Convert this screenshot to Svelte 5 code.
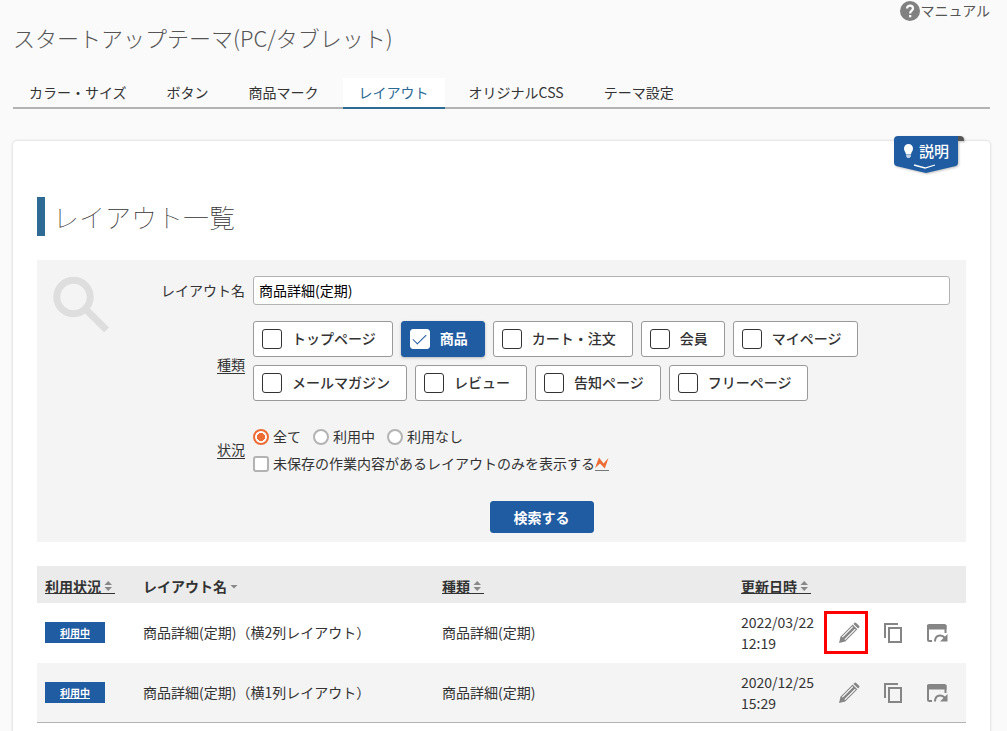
<script>
  const tabs = ['カラー・サイズ', 'ボタン', '商品マーク', 'レイアウト', 'オリジナルCSS', 'テーマ設定'];
  const kinds = ['トップページ', '商品', 'カート・注文', '会員', 'マイページ', 'メールマガジン', 'レビュー', '告知ページ', 'フリーページ'];
  const statuses = ['全て', '利用中', '利用なし'];
  const rows = [
    { name: '商品詳細(定期)（横2列レイアウト）', kind: '商品詳細(定期)', date: '2022/03/22', time: '12:19', marked: true },
    { name: '商品詳細(定期)（横1列レイアウト）', kind: '商品詳細(定期)', date: '2020/12/25', time: '15:29', marked: false }
  ];
  let name = $state('商品詳細(定期)');
  let selectedKinds = $state(['商品']);
  let status = $state('全て');
  let unsaved = $state(false);
</script>

{#snippet sorter(both)}
  <svg class="sort" width="14" height="14" viewBox="0 0 14 14" aria-hidden="true">
    {#if both}
      <path d="M3.500 6h7.500L7.200 2zM3.500 8h7.500L7.200 12z" />
    {:else}
      <path d="M3.500 6h7L7 9.500z" />
    {/if}
  </svg>
{/snippet}

<div class="page">
  <header>
    <a class="manual" href="#manual">
      <svg width="20" height="20" viewBox="0 0 20 20" aria-hidden="true">
        <circle cx="10" cy="10" r="10" fill="#808080" />
        <path d="M7 7.600C7 3.500 13 3.700 13 7.400C13 9.600 10.100 9.700 10.100 12.500" fill="none" stroke="#fafafa" stroke-width="2.200" />
        <rect x="9" y="14" width="2.300" height="2.300" fill="#fafafa" />
      </svg>マニュアル
    </a>
    <h1>スタートアップテーマ(PC/タブレット)</h1>
  </header>

  <nav>
    {#each tabs as tab}
      <a href="#tab" class:active={tab === 'レイアウト'}>{tab}</a>
    {/each}
  </nav>

  <main>
    <button class="help" type="button">
      <svg class="ribbon" width="72" height="40" viewBox="0 0 72 40" aria-hidden="true">
        <path d="M62 0h4a4 4 0 0 1 4 4v1h-8z" fill="#555" />
        <path d="M4 0h60v27q0 2-2 3l-30 7l-30-7q-2-1-2-3V4q0-4 4-4z" fill="#1f5ca2" />
        <path d="M20 29l11 3l10-3" fill="none" stroke="#fff" stroke-width="1.300" />
        <path d="M14.500 8a4.500 4.500 0 0 1 4.500 4.500c0 2.500-1.700 3.500-2 6h-5c-.3-2.500-2-3.500-2-6A4.500 4.500 0 0 1 14.500 8z" fill="#fff" />
        <path d="M12.200 19h4.600v1.500l-1.200 1.500h-2.200l-1.200-1.500z" fill="#c5d3e4" />
      </svg>
      <span>説明</span>
    </button>

    <h2>レイアウト一覧</h2>

    <form onsubmit={(e) => e.preventDefault()}>
      <svg class="magnifier" width="56" height="56" viewBox="0 0 56 56" aria-hidden="true">
        <circle cx="20.500" cy="21" r="16.700" fill="none" stroke="#dedede" stroke-width="7" />
        <path d="M32 32.500l21.500 21.500" stroke="#dedede" stroke-width="7" />
      </svg>
      <div class="fields">
        <label class="caption" for="layout-name">レイアウト名</label>
        <input id="layout-name" class="text" type="text" bind:value={name} />

        <span class="caption hint" id="kind-label">種類</span>
        <div class="kinds" role="group" aria-labelledby="kind-label">
          {#each kinds as kind}
            <label class="kind" class:on={selectedKinds.includes(kind)}>
              <input type="checkbox" value={kind} bind:group={selectedKinds} /><span>{kind}</span>
            </label>
          {/each}
        </div>

        <span class="caption hint" id="status-label">状況</span>
        <div class="status" role="group" aria-labelledby="status-label">
          <div class="radios">
            {#each statuses as s}
              <label><input type="radio" name="status" value={s} bind:group={status} />{s}</label>
            {/each}
          </div>
          <label class="unsaved">
            <input type="checkbox" bind:checked={unsaved} />未保存の作業内容があるレイアウトのみを表示する<svg class="flash" width="14" height="16" viewBox="0 0 14 16" aria-hidden="true">
              <path d="M0 12L4 1.500L8.500 7.500L13.500 2L9.800 12.500L5 7.500z" fill="#ed6c34" />
              <path d="M0 14.500h14" stroke="#777" />
            </svg>
          </label>
        </div>

        <button class="search" type="submit">検索する</button>
      </div>
    </form>

    <table>
      <colgroup><col class="c-use" /><col class="c-name" /><col class="c-kind" /><col class="c-date" /><col /></colgroup>
      <thead>
        <tr>
          <th><a class="under" href="#sort">利用状況{@render sorter(true)}</a></th>
          <th><a href="#sort">レイアウト名{@render sorter(false)}</a></th>
          <th><a class="under" href="#sort">種類{@render sorter(true)}</a></th>
          <th><a class="under" href="#sort">更新日時{@render sorter(true)}</a></th>
          <th></th>
        </tr>
      </thead>
      <tbody>
        {#each rows as row}
          <tr>
            <td><span class="using">利用中</span></td>
            <td>{row.name}</td>
            <td>{row.kind}</td>
            <td class="date">{row.date}<br />{row.time}</td>
            <td class="tools">
              <div class="actions">
                <button type="button" class:marked={row.marked} aria-label="編集">
                  <svg width="22" height="22" viewBox="0 0 22 22" aria-hidden="true">
                    <path d="M1 21l1.500-6.200L14.700 2.600l4.700 4.700L7.200 19.500z" fill="#858585" />
                    <path d="M15.400 1.900l1-1q.9-.8 1.800 0l2.900 2.900q.8.900 0 1.800l-1 1z" fill="#858585" />
                    <path d="M4.300 15.200L14.800 4.700M6.800 17.700L17.300 7.200" stroke="#fff" stroke-width="1.100" />
                    <path d="M14.600 1.900l5.500 5.500" stroke="#fff" stroke-width=".6" />
                  </svg>
                </button>
                <button type="button" aria-label="複製">
                  <svg width="22" height="22" viewBox="0 0 22 22" fill="none" stroke="#858585" stroke-width="2" aria-hidden="true">
                    <path d="M3 16V2h13" />
                    <rect x="7" y="6" width="12" height="14" />
                  </svg>
                </button>
                <button type="button" aria-label="プレビュー">
                  <svg width="22" height="22" viewBox="0 0 22 22" fill="none" stroke="#858585" aria-hidden="true">
                    <path d="M6 19H3.500q-1.500 0-1.500-1.500V4h17.500V11" stroke-width="2" />
                    <path d="M1 7.500V4q0-2 2-2h15.500q2 0 2 2v3.500z" fill="#858585" stroke="none" />
                    <path d="M9 19.500c0-6.500 6.500-7.500 10-3.500" stroke-width="2" />
                    <path d="M21.500 12v7.500h-7.500z" fill="#858585" stroke="none" />
                  </svg>
                </button>
              </div>
            </td>
          </tr>
        {/each}
      </tbody>
    </table>
  </main>
</div>

<style>
  :global(body) {
    background: #fafafa;
    overflow: hidden;
  }
  .page {
    padding: 0 17px 0 13px;
    font: 14px/21px "Noto Sans CJK JP", sans-serif;
    color: #333;
  }
  .page :is(input, button) {
    box-sizing: border-box;
    margin: 0;
    font: inherit;
    color: inherit;
  }
  a { color: inherit; text-decoration: none; }
  header { display: flex; flex-direction: column; }
  .manual { display: flex; align-self: flex-end; align-items: center; color: #555; height: 21px; }
  h1 { margin: 0 0 24px; font-size: 22px; line-height: 33px; font-weight: 300; color: #555; }
  nav { display: flex; gap: 8px; height: 31px; box-shadow: inset 0 -2px #b3b3b3; }
  nav a { padding: 4px 16px 6px; }
  nav .active { color: #2d6b94; background: #fff; box-shadow: inset 0 -2px #2d6b94; }
  main {
    position: relative;
    margin-top: 32px;
    padding: 56px 24px 24px;
    background: #fff;
    border-radius: 4px;
    box-shadow: 0 0 3px rgba(0, 0, 0, 0.2);
  }
  .help {
    position: absolute;
    top: -5px;
    right: 24px;
    width: 72px;
    height: 40px;
    padding: 0;
    border: 0;
    background: none;
  }
  .page .help { color: #fff; font-size: 15px; font-weight: 500; text-align: left; }
  .ribbon { position: absolute; inset: 0; filter: drop-shadow(1px 1px 1px rgba(0, 0, 0, 0.25)); }
  .help span { position: absolute; left: 25px; top: 4px; }
  h2 {
    margin: 0 0 24px;
    padding-left: 8px;
    border-left: 8px solid #2d6b94;
    font-size: 26px;
    line-height: 39px;
    font-weight: 100;
  }
  form { display: flex; gap: 24px; padding: 16px 16px 9px; background: #f4f4f4; }
  .magnifier { flex: none; }
  .fields {
    flex: 1;
    display: grid;
    grid-template-columns: 112px 1fr;
    column-gap: 8px;
    align-items: center;
  }
  .caption { justify-self: end; }
  .hint { padding-top: 15px; text-decoration: underline; text-underline-offset: 3px; }
  .page .text {
    width: 100%;
    height: 29px;
    padding: 0 5px 2px;
    border: 1px solid #b3b3b3;
    border-radius: 3px;
    background: #fff;
    color: #000;
  }
  .kinds { display: flex; flex-wrap: wrap; gap: 8px; padding: 16px 0 8px; }
  .kind {
    display: flex;
    align-items: center;
    gap: 10px;
    box-sizing: border-box;
    height: 36px;
    padding: 0 16px 0 8px;
    border: 1px solid #999;
    border-radius: 3px;
    background: #fff;
    font-weight: 500;
  }
  .kind span { padding-bottom: 2px; }
  .kind.on { background: #1f5ca2; border-color: #1f5ca2; color: #fff; font-weight: 700; box-shadow: 0 1px 3px rgba(0, 0, 0, 0.25); }
  .page .kind input {
    appearance: none;
    width: 20px;
    height: 20px;
    border: 1px solid #333;
    border-radius: 3px;
    background: #fff;
  }
  .page .kind.on input {
    border-color: #fff;
    display: grid;
    place-items: center;
  }
  .kind.on input::before {
    content: '';
    width: 12px;
    height: 6px;
    margin-top: -4px;
    border-left: 1px solid #1f5ca2;
    border-bottom: 1px solid #1f5ca2;
    rotate: -45deg;
  }
  .status { padding-top: 17px; }
  .status label { display: flex; align-items: center; gap: 4px; }
  .radios { display: flex; gap: 12px; margin-bottom: 6px; }
  .status .flash { margin-left: -4px; }
  .page .status input {
    appearance: none;
    width: 16px;
    height: 16px;
    border: 2px solid #b3b3b3;
    background: #fff;
    border-radius: 3px;
  }
  .page .status input[type='radio'] { border-radius: 50%; }
  .page .status input[type='radio']:checked {
    border-color: #ed6c34;
    background: radial-gradient(#ed6c34 0 4px, #fff 4px);
  }
  .page .search {
    grid-column: 1 / -1;
    justify-self: center;
    height: 32px;
    margin-top: 27px;
    padding: 0 23px;
    border: 1px solid #1f5ca2;
    border-radius: 3px;
    background: #1f5ca2;
    color: #fff;
    font-weight: 700;
  }
  table { width: 100%; margin-top: 24px; table-layout: fixed; border-collapse: separate; border-spacing: 0; }
  .c-use { width: 98px; }
  .c-name { width: 299px; }
  .c-kind { width: 299px; }
  .c-date { width: 91px; }
  th { height: 37px; padding: 0 8px; background: #ebebeb; text-align: left; font-weight: 700; }
  th a { display: inline-flex; line-height: 14px; vertical-align: middle; border-bottom: 1px solid transparent; }
  .under { border-color: #333; }
  .sort { fill: #888; }
  td { box-sizing: border-box; height: 60px; padding: 0 8px; border-bottom: 1px solid transparent; }
  tbody tr:nth-child(even) { background: #f4f4f4; }
  tbody tr:last-child td { border-color: #b3b3b3; }
  .date { white-space: nowrap; }
  .tools { padding: 0; }
  .using {
    display: block;
    width: 60px;
    background: #1f5ca2;
    color: #fff;
    font-size: 10px;
    font-weight: 700;
    text-align: center;
    text-decoration: underline;
  }
  .actions { display: flex; }
  .page .actions button {
    display: grid;
    place-items: center;
    width: 44px;
    height: 43px;
    padding: 0 0 0 5px;
    border: 0;
    background: none;
  }
  .page .actions .marked { outline: 3px solid #f00; outline-offset: -3px; }
</style>
